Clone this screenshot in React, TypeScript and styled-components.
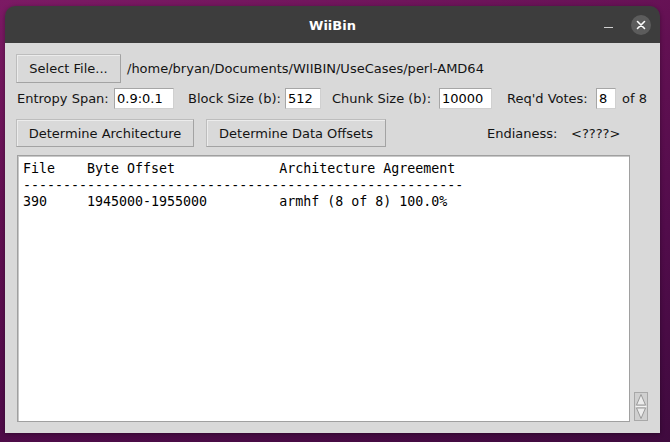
import React from "react";
import styled, { createGlobalStyle } from "styled-components";

const GlobalStyle = createGlobalStyle`
  html, body {
    margin: 0;
    padding: 0;
    width: 670px;
    height: 442px;
    overflow: hidden;
    background: linear-gradient(165deg, #7c1a64 0%, #621052 35%, #520c4b 65%, #3f0a3e 100%);
    font-family: "DejaVu Sans", sans-serif;
  }
`;

const Desktop = styled.div`
  width: 670px;
  height: 442px;
  box-sizing: border-box;
  padding: 6px 10px 9px 5px;
  display: flex;
`;

const Window = styled.div`
  width: 655px;
  height: 427px;
  display: flex;
  flex-direction: column;
  border-radius: 10px 10px 0 0;
  overflow: hidden;
  box-shadow: 0 1px 4px rgba(0, 0, 0, 0.35);
`;

const TitleBar = styled.div`
  height: 37px;
  flex: none;
  background: #3d3d3d;
  display: grid;
  grid-template-columns: 1fr auto 1fr;
  align-items: center;
`;

const Title = styled.div`
  grid-column: 2;
  color: #ffffff;
  font-family: "DejaVu Sans", sans-serif;
  font-weight: bold;
  font-size: 13px;
  padding-top: 1px;
`;

const Controls = styled.div`
  grid-column: 3;
  justify-self: end;
  display: flex;
  align-items: center;
  gap: 18px;
  padding-right: 9px;
`;

const MinButton = styled.div`
  width: 9px;
  height: 1px;
  background: #cfcfcf;
  margin-top: 6px;
`;

const CloseButton = styled.div`
  width: 20px;
  height: 20px;
  border-radius: 50%;
  background: #5c5c5c;
  display: flex;
  align-items: center;
  justify-content: center;
`;

const Content = styled.div`
  flex: 1;
  background: #d9d9d9;
  box-sizing: border-box;
  padding: 11px 12px 11px 11px;
  display: flex;
  flex-direction: column;
  color: #141414;
  font-size: 13px;
  font-family: "DejaVu Sans", sans-serif;
`;

const Row = styled.div<{ $mt?: number; $h: number }>`
  display: flex;
  align-items: center;
  height: ${(p) => p.$h}px;
  margin-top: ${(p) => p.$mt ?? 0}px;
  flex: none;
`;

const Button = styled.div<{ $ml?: number; $w: number; $h: number }>`
  box-sizing: border-box;
  width: ${(p) => p.$w}px;
  height: ${(p) => p.$h}px;
  margin-left: ${(p) => p.$ml ?? 0}px;
  display: flex;
  align-items: center;
  justify-content: center;
  background: #d9d9d9;
  border: 1px solid #a3a3a3;
  border-top-color: #bdbdbd;
  border-left-color: #bdbdbd;
  box-shadow: inset 1px 1px 0 #ececec;
  color: #141414;
  white-space: nowrap;
`;

const Text = styled.span<{ $ml?: number; $w?: number }>`
  margin-left: ${(p) => p.$ml ?? 0}px;
  ${(p) => (p.$w ? `width: ${p.$w}px; flex: none;` : "")}
  white-space: nowrap;
`;

const Entry = styled.div<{ $w: number }>`
  box-sizing: border-box;
  width: ${(p) => p.$w}px;
  height: 21px;
  flex: none;
  background: #ffffff;
  border: 1px solid #a6a6a6;
  border-bottom-color: #d0d0d0;
  border-right-color: #d0d0d0;
  padding: 0 2px;
  display: flex;
  align-items: center;
  color: #000000;
  white-space: nowrap;
  overflow: hidden;
`;

const OutputRow = styled.div`
  flex: 1;
  margin-top: 8px;
  display: flex;
  align-items: flex-end;
  gap: 4px;
  min-height: 0;
`;

const OutputBox = styled.pre`
  margin: 0;
  box-sizing: border-box;
  margin-left: 1px;
  width: 613px;
  height: 100%;
  background: #ffffff;
  border: 1px solid #a0a0a0;
  box-shadow: inset 1px 1px 0 #c8c8c8;
  padding: 5px 5px;
  font-family: "DejaVu Sans Mono", monospace;
  font-size: 13.3px;
  line-height: 16.5px;
  color: #000000;
  overflow: hidden;
`;

const ScrollArrows = styled.div`
  width: 14px;
  height: 29px;
  margin-bottom: 1px;
  flex: none;
  display: flex;
`;

const lines = [
  "File    Byte Offset             Architecture Agreement",
  "-------------------------------------------------------",
  "390     1945000-1955000         armhf (8 of 8) 100.0%",
];

export default function App() {
  return (
    <>
      <GlobalStyle />
      <Desktop>
        <Window>
          <TitleBar>
            <Title>WiiBin</Title>
            <Controls>
              <MinButton />
              <CloseButton>
                <svg width="10" height="10" viewBox="0 0 10 10">
                  <path d="M1.5 1.5 L8.5 8.5 M8.5 1.5 L1.5 8.5" stroke="#ffffff" strokeWidth="1.6" strokeLinecap="round" />
                </svg>
              </CloseButton>
            </Controls>
          </TitleBar>
          <Content>
            <Row $h={29}>
              <Button $w={105} $h={29}>Select File...</Button>
              <Text $ml={6}>/home/bryan/Documents/WIIBIN/UseCases/perl-AMD64</Text>
            </Row>
            <Row $h={21} $mt={5}>
              <Text $ml={1} $w={97}>Entropy Span:</Text>
              <Entry $w={60}>0.9:0.1</Entry>
              <Text $ml={14} $w={97}>Block Size (b):</Text>
              <Entry $w={36}>512</Entry>
              <Text $ml={11} $w={107}>Chunk Size (b):</Text>
              <Entry $w={53}>10000</Entry>
              <Text $ml={15} $w={89}>Req'd Votes:</Text>
              <Entry $w={20}>8</Entry>
              <Text $ml={6}>of 8</Text>
            </Row>
            <Row $h={28} $mt={10}>
              <Button $w={178} $h={28}>Determine Architecture</Button>
              <Button $w={180} $h={28} $ml={12}>Determine Data Offsets</Button>
              <Text $ml={101} $w={84}>Endianess:</Text>
              <Text>&lt;????&gt;</Text>
            </Row>
            <OutputRow>
              <OutputBox>{lines.join("\n")}</OutputBox>
              <ScrollArrows>
                <svg width="14" height="29" viewBox="0 0 14 29">
                  <rect x="0.5" y="0.5" width="13" height="28" fill="#d0d0d0" stroke="#a8a8a8" />
                  <polygon points="7,2.5 2.5,13 11.5,13" fill="#ececec" stroke="#9a9a9a" />
                  <line x1="1.5" y1="14.5" x2="12.5" y2="14.5" stroke="#f4f4f4" />
                  <polygon points="2.5,16 11.5,16 7,26.5" fill="#ececec" stroke="#9a9a9a" />
                </svg>
              </ScrollArrows>
            </OutputRow>
          </Content>
        </Window>
      </Desktop>
    </>
  );
}
